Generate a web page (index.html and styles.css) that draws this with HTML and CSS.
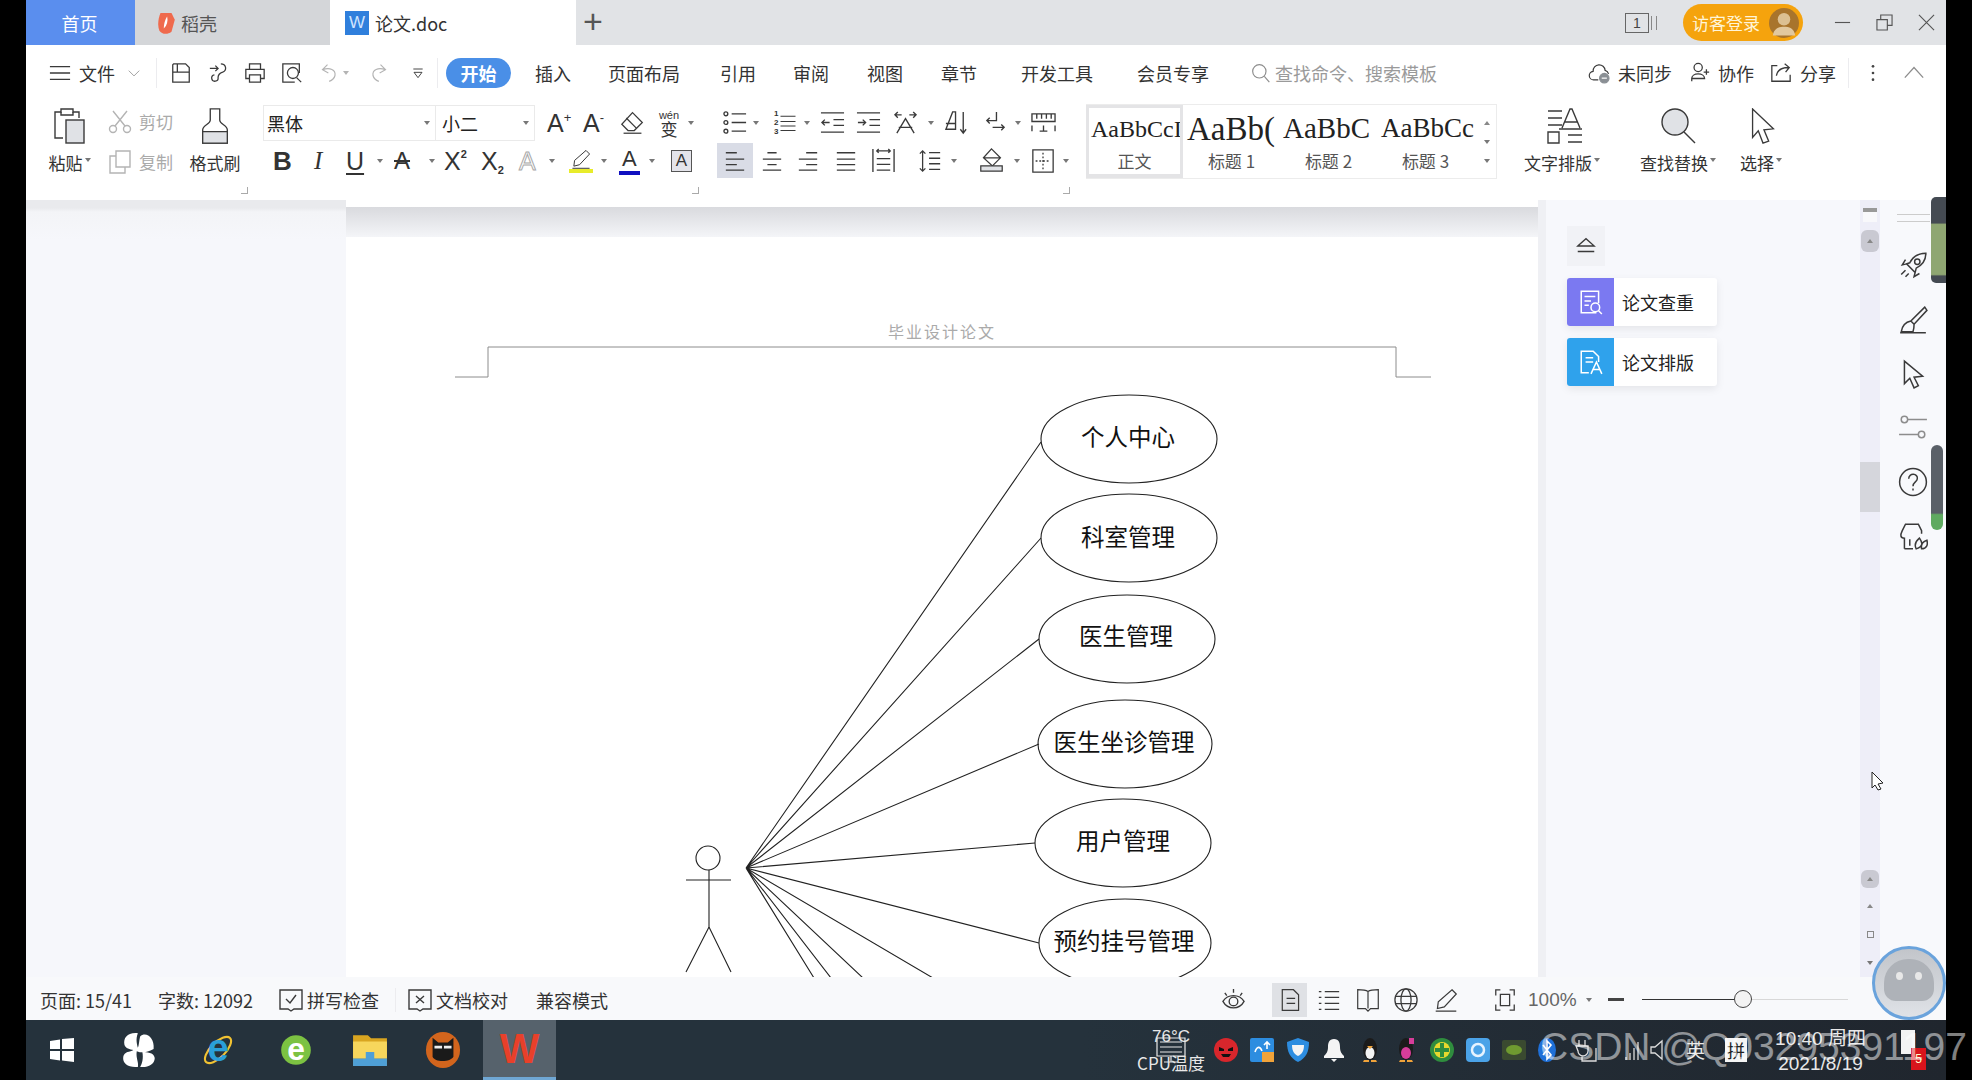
FILE: index.html
```html
<!DOCTYPE html>
<html lang="zh">
<head>
<meta charset="utf-8">
<title>论文.doc</title>
<link rel="stylesheet" href="styles.css">
</head>
<body>
<svg class="defs" width="0" height="0">
  <symbol id="menu" viewBox="0 0 24 24"><path d="M1 5h22M1 12h22M1 19h22"/></symbol>
  <symbol id="chev" viewBox="0 0 24 24"><path d="M3 8l9 9 9-9"/></symbol>
  <symbol id="save" viewBox="0 0 24 24"><path d="M4 2h13l4 4v16H3V3zM3 11h18M8 11V2"/></symbol>
  <symbol id="send" viewBox="0 0 24 24"><path d="M2 7h9M8 4l3 3-3 3M14 2c6 0 7 7 2 9-3 1-5 3-5 6a3.500 3.500 0 1 1-4-3"/></symbol>
  <symbol id="print" viewBox="0 0 24 24"><path d="M6 8V2h12v6M6 18H2V8h20v10h-4M6 14h12v8H6z"/></symbol>
  <symbol id="preview" viewBox="0 0 24 24"><path d="M15 22H2V2h18v10"/><circle cx="13" cy="12" r="6"/><path d="M17 17l5 5"/></symbol>
  <symbol id="undo" viewBox="0 0 24 24"><path d="M9 2L3 8l7 4M3 8c9-3 16 0 15 7-1 4-4 6-7 7"/></symbol>
  <symbol id="redo" viewBox="0 0 24 24"><path d="M15 2l6 6-7 4M21 8c-9-3-16 0-15 7 1 4 4 6 7 7"/></symbol>
  <symbol id="custom" viewBox="0 0 24 24"><path d="M5 6h14M6 11h12l-6 8z"/></symbol>
  <symbol id="search" viewBox="0 0 24 24"><circle cx="10" cy="10" r="8"/><path d="M16 16l6 7"/></symbol>
  <symbol id="cloud" viewBox="0 0 28 24"><path d="M12 20H7a5 5 0 0 1-1-10 7 7 0 0 1 14-1 6 6 0 0 1 4 4"/><circle cx="19" cy="18" r="5.500" class="fill-gray"/><path class="stroke-white" d="M16 18h6"/></symbol>
  <symbol id="collab" viewBox="0 0 24 24"><circle cx="10" cy="6" r="4.500"/><path d="M3 21v-3c0-3 3-5 7-5s7 2 7 5H3zM19 8v6M16 11h6"/></symbol>
  <symbol id="shareup" viewBox="0 0 24 24"><path d="M8 4H2v17h20v-7M7 15c1-6 6-9 13-9M16 2l5 4-4 5"/></symbol>
  <symbol id="dots" viewBox="0 0 6 24"><circle cx="3" cy="4" r="1.600" class="fill-dark"/><circle cx="3" cy="12" r="1.600" class="fill-dark"/><circle cx="3" cy="20" r="1.600" class="fill-dark"/></symbol>
  <symbol id="caretup" viewBox="0 0 24 24"><path d="M2 17L12 6l10 11"/></symbol>
  <symbol id="paste" viewBox="0 0 32 36"><path d="M9 30H1V4h6V1h12v3h6v6"/><path d="M7 4v3h12V4"/><rect x="12" y="12" width="18" height="23" class="fill-light"/></symbol>
  <symbol id="cut" viewBox="0 0 24 24"><circle cx="5" cy="19" r="3.500"/><circle cx="19" cy="19" r="3.500"/><path d="M7 16L19 1M17 16L5 1"/></symbol>
  <symbol id="copy" viewBox="0 0 24 24"><path d="M8 1h14v16H8zM8 6H2v17h15v-6"/></symbol>
  <symbol id="brush" viewBox="0 0 30 38"><path d="M10 1h10v12c0 4 8 5 8 10v14H2V23c0-5 8-6 8-10z"/><path d="M2 25h26v12H2z" class="fill-light"/></symbol>
  <symbol id="eraser" viewBox="0 0 28 28"><path d="M14 3l11 11-9 9H9l-7-7zM7 9l11 11" /><path d="M4 26h20"/></symbol>
  <symbol id="bullets" viewBox="0 0 26 26"><circle cx="3" cy="4" r="2"/><circle cx="3" cy="13" r="2"/><circle cx="3" cy="22" r="2"/><path d="M9 4h15M9 13h15M9 22h15"/></symbol>
  <symbol id="outdent" viewBox="0 0 26 26"><path d="M1 3h24M14 10h11M14 16h11M1 23h24M10 13H2M5 10l-3 3 3 3"/></symbol>
  <symbol id="indent" viewBox="0 0 26 26"><path d="M1 3h24M14 10h11M14 16h11M1 23h24M2 13h8M7 10l3 3-3 3"/></symbol>
  <symbol id="cross" viewBox="0 0 26 26"><path d="M4 24L13 9l9 15M6 18h14M2 5h7M5 2L2 5l3 3M24 5h-7M21 2l3 3-3 3"/></symbol>
  <symbol id="sortA" viewBox="0 0 26 26"><path d="M2 20L9 2h3v18zM2 20h10M2 14l10 0M20 2v22M17 20l3 4 3-4"/></symbol>
  <symbol id="para" viewBox="0 0 26 26"><path d="M14 2v9H4M7 8l-3 3 3 3M10 18h12M19 15l3 3-3 3"/></symbol>
  <symbol id="ruler" viewBox="0 0 26 26"><path d="M1 4h24v8H1zM6 4v5M11 4v5M16 4v5M21 4v5M1 16v6M25 16v6M9 22h8M13 16v6"/></symbol>
  <symbol id="al" viewBox="0 0 24 24"><path d="M2 3h12M2 10h20M2 16h12M2 22h20"/></symbol>
  <symbol id="ac" viewBox="0 0 24 24"><path d="M7 3h10M2 10h20M7 16h10M2 22h20"/></symbol>
  <symbol id="ar" viewBox="0 0 24 24"><path d="M10 3h12M2 10h20M10 16h12M2 22h20"/></symbol>
  <symbol id="aj" viewBox="0 0 24 24"><path d="M2 3h20M2 10h20M2 16h20M2 22h20"/></symbol>
  <symbol id="ad" viewBox="0 0 26 26"><path d="M2 1v24M24 1v24M6 3h14M8 1L6 3l2 2M18 1l2 2-2 2M6 11h14M6 17h14M6 23h14"/></symbol>
  <symbol id="lines" viewBox="0 0 26 26"><path d="M5 2v22M2 5l3-3 3 3M2 21l3 3 3-3M12 4h12M12 10h12M12 16h12M12 22h12"/></symbol>
  <symbol id="shade" viewBox="0 0 28 28"><path d="M14 1l10 10-9 9-10-9zM5 11h19"/><path d="M2 20h24v6H2z" class="fill-light"/></symbol>
  <symbol id="border" viewBox="0 0 26 26"><path d="M2 1h22v24H2z"/><path d="M13 4v18M5 13h16" stroke-dasharray="2 2"/></symbol>
  <symbol id="typeset" viewBox="0 0 36 36"><path d="M1 3h14M1 10h14M1 17h14M15 20L23 1h2l8 19M18 14h12M12 21h23M21 27h14M21 34h14M1 24h11v11H1z"/></symbol>
  <symbol id="find" viewBox="0 0 36 36"><circle cx="15" cy="14" r="13" class="fill-light"/><path d="M24 24l11 11"/></symbol>
  <symbol id="pointer" viewBox="0 0 26 38"><path d="M2 1l22 21-10 1 5 12-6 2-5-13-6 7z"/></symbol>
  <symbol id="minus" viewBox="0 0 18 18"><path d="M1 9h16"/></symbol>
  <symbol id="restore" viewBox="0 0 18 18"><path d="M1 6h11v11H1zM5 6V1h12v11h-5"/></symbol>
  <symbol id="close" viewBox="0 0 18 18"><path d="M1 1l16 16M17 1L1 17"/></symbol>
  <symbol id="eject" viewBox="0 0 24 24"><path d="M3 12l9-8 9 8zM3 18h18"/></symbol>
  <symbol id="rocket" viewBox="0 0 28 28"><path d="M26 2c-7 0-12 3-15 9l-3 1 8 8 1-4c6-3 9-8 9-14zM8 12l-4 1 3-5M16 20l-1 4 5-3M7 18l-4 4M10 21l-3 3"/><circle cx="18" cy="10" r="2.500"/></symbol>
  <symbol id="pen" viewBox="0 0 28 28"><path d="M25 2l-13 13 3 3L27 5zM12 15c-5 1-8 4-9 10h11c1-3 1-5 1-7M2 26h24"/></symbol>
  <symbol id="arrow" viewBox="0 0 24 28"><path d="M4 2l17 14-8 1 4 8-4 2-4-9-5 5z"/></symbol>
  <symbol id="sliders" viewBox="0 0 28 28"><circle cx="6" cy="6" r="3"/><path d="M9 6h18M1 20h18"/><circle cx="22" cy="20" r="3"/></symbol>
  <symbol id="help" viewBox="0 0 28 28"><circle cx="14" cy="14" r="12.500"/><path d="M10 11c0-6 9-5 8 0 0 3-4 3-4 7M14 20v2"/></symbol>
  <symbol id="store" viewBox="0 0 28 28"><path d="M6 26V16c-4 0-4-3-2-7l3-6h12l3 6v3M6 26h8M11 17v6"/><path d="M17 26c-3-6 2-9 3-10 2 3 5 7-3 10zM22 26c5 0 6-4 5-8-3 1-6 3-5 8z"/></symbol>
  <symbol id="spell" viewBox="0 0 24 24"><path d="M1 2h22v19h-8l-3 2-3-2H1zM7 11l4 4 6-8"/></symbol>
  <symbol id="proof" viewBox="0 0 24 24"><path d="M1 2h22v19h-8l-3 2-3-2H1zM8 8l8 7M16 8l-8 7"/></symbol>
  <symbol id="eye" viewBox="0 0 26 26"><path d="M2 15c5-8 17-8 22 0-5 9-17 9-22 0z"/><circle cx="13" cy="15" r="4.500"/><path d="M4 6l2 3M13 2v4M22 6l-2 3"/></symbol>
  <symbol id="page" viewBox="0 0 24 28"><path d="M3 2h13l6 6v18H3zM8 12h10M8 18h10"/></symbol>
  <symbol id="outline" viewBox="0 0 26 26"><path d="M1 3h3M8 3h17M1 10h3M8 10h17M1 17h3M8 17h17M1 24h3M8 24h17"/></symbol>
  <symbol id="book" viewBox="0 0 26 28"><path d="M13 4C10 2 5 2 1 2v22h9l3 3 3-3h9V2c-4 0-9 0-12 2zM13 4v20"/></symbol>
  <symbol id="globe" viewBox="0 0 26 26"><circle cx="13" cy="13" r="12"/><ellipse cx="13" cy="13" rx="5.500" ry="12"/><path d="M1 9h24M1 17h24"/></symbol>
  <symbol id="markup" viewBox="0 0 26 28"><path d="M20 2l5 5L11 22l-8 2 1-8zM1 27h24"/></symbol>
  <symbol id="fit" viewBox="0 0 24 26"><path d="M7 2H2v6M17 2h5v6M7 24H2v-6M17 24h5v-6M7 7h10v12H7z"/></symbol>
</svg>

<div class="app">
  <header class="titlebar">
    <div class="tab tab-home">首页</div>
    <div class="tab tab-shell">
      <svg class="shell-logo" viewBox="0 0 16 20"><path class="shell-red" d="M3 1h10l3 6-3 11c-4 3-9 2-11-1C0 12 1 6 3 1z"/><path class="shell-white" d="M9 4c1 4 0 8-3 11 0-4 1-8 3-11z"/></svg>
      <span>稻壳</span>
    </div>
    <div class="tab tab-doc">
      <span class="doc-logo">W</span>
      <span>论文.doc</span>
    </div>
    <div class="tab-add">+</div>
    <div class="title-right">
      <div class="page-box"><span class="page-num">1</span><span class="page-bars"></span></div>
      <div class="login"><span>访客登录</span><svg class="avatar" viewBox="0 0 24 24"><circle cx="12" cy="12" r="12" class="av-bg"/><circle cx="12" cy="9" r="5" class="av-head"/><path class="av-body" d="M3 22c1-6 5-7 9-7s8 1 9 7z"/></svg></div>
      <svg class="win"><use href="#minus"/></svg>
      <svg class="win"><use href="#restore"/></svg>
      <svg class="win"><use href="#close"/></svg>
    </div>
  </header>

  <nav class="menubar">
    <svg class="ic i22"><use href="#menu"/></svg>
    <span>文件</span>
    <svg class="ic i14 dim"><use href="#chev"/></svg>
    <i class="vsep"></i>
    <svg class="ic i22"><use href="#save"/></svg>
    <svg class="ic i22"><use href="#send"/></svg>
    <svg class="ic i22"><use href="#print"/></svg>
    <svg class="ic i22"><use href="#preview"/></svg>
    <svg class="ic i20 faint"><use href="#undo"/></svg>
    <i class="caret faint-caret"></i>
    <svg class="ic i20 faint"><use href="#redo"/></svg>
    <svg class="ic i16"><use href="#custom"/></svg>
    <i class="vsep"></i>
    <span class="pill">开始</span>
    <span>插入</span>
    <span>页面布局</span>
    <span>引用</span>
    <span>审阅</span>
    <span>视图</span>
    <span>章节</span>
    <span>开发工具</span>
    <span>会员专享</span>
    <svg class="ic i20 dim"><use href="#search"/></svg>
    <span class="muted">查找命令、搜索模板</span>
    <svg class="ic i24"><use href="#cloud"/></svg>
    <span>未同步</span>
    <svg class="ic i22"><use href="#collab"/></svg>
    <span>协作</span>
    <svg class="ic i22"><use href="#shareup"/></svg>
    <span>分享</span>
    <i class="vsep"></i>
    <svg class="ic i18"><use href="#dots"/></svg>
    <svg class="ic i22 dim"><use href="#caretup"/></svg>
  </nav>

  <section class="ribbon">
    <div class="ribbon-main">
      <div class="big big-paste">
        <svg class="ic big-ic"><use href="#paste"/></svg>
        <span class="big-label">粘贴<i class="caret"></i></span>
      </div>
      <div class="clip-col">
        <div class="clip-item"><svg class="ic i24 faint"><use href="#cut"/></svg><span>剪切</span></div>
        <div class="clip-item"><svg class="ic i24 faint"><use href="#copy"/></svg><span>复制</span></div>
      </div>
      <div class="big big-brush">
        <svg class="ic big-ic"><use href="#brush"/></svg>
        <span class="big-label">格式刷</span>
      </div>

      <div class="tools">
        <div class="tool-row tool-row-a">
          <div class="select select-font"><span>黑体</span><i class="caret"></i></div>
          <div class="select select-size"><span>小二</span><i class="caret"></i></div>
          <span class="glyph">A<sup class="mini">+</sup></span>
          <span class="glyph">A<sup class="mini">-</sup></span>
          <svg class="ic i26"><use href="#eraser"/></svg>
          <span class="wen"><b>wén</b><em>变</em></span>
          <i class="caret"></i>
          <svg class="ic i26"><use href="#bullets"/></svg>
          <i class="caret"></i>
          <span class="numlist"><span class="nums">1<br>2<br>3</span><svg class="ic i18h"><use href="#aj"/></svg></span>
          <i class="caret"></i>
          <svg class="ic i26"><use href="#outdent"/></svg>
          <svg class="ic i26"><use href="#indent"/></svg>
          <svg class="ic i26"><use href="#cross"/></svg>
          <i class="caret"></i>
          <svg class="ic i26"><use href="#sortA"/></svg>
          <svg class="ic i26"><use href="#para"/></svg>
          <i class="caret"></i>
          <svg class="ic i26"><use href="#ruler"/></svg>
        </div>
        <div class="tool-row tool-row-b">
          <b class="glyph glyph-b">B</b>
          <i class="glyph glyph-i">I</i>
          <span class="glyph glyph-u">U</span><i class="caret"></i>
          <span class="glyph glyph-s">A</span><i class="caret"></i>
          <span class="glyph">X<sup class="mini-b">2</sup></span>
          <span class="glyph">X<sub class="mini-b">2</sub></span>
          <span class="glyph glyph-o">A</span><i class="caret"></i>
          <span class="hl"><svg class="ic i20"><use href="#markup"/></svg></span><i class="caret"></i>
          <span class="glyph glyph-c">A</span><i class="caret"></i>
          <span class="glyph glyph-box">A</span>
          <span class="sel-bg"><svg class="ic i22"><use href="#al"/></svg></span>
          <svg class="ic i22"><use href="#ac"/></svg>
          <svg class="ic i22"><use href="#ar"/></svg>
          <svg class="ic i22"><use href="#aj"/></svg>
          <svg class="ic i26"><use href="#ad"/></svg>
          <svg class="ic i24"><use href="#lines"/></svg><i class="caret"></i>
          <svg class="ic i26"><use href="#shade"/></svg><i class="caret"></i>
          <svg class="ic i24"><use href="#border"/></svg><i class="caret"></i>
        </div>
      </div>

      <div class="gallery">
        <div class="style style-on"><span class="sample s1">AaBbCcI</span><span class="style-name">正文</span></div>
        <div class="style"><span class="sample s2">AaBb(</span><span class="style-name">标题 1</span></div>
        <div class="style"><span class="sample s3">AaBbC</span><span class="style-name">标题 2</span></div>
        <div class="style"><span class="sample s4">AaBbCc</span><span class="style-name">标题 3</span></div>
        <div class="gallery-nav"><i class="caret caret-up"></i><i class="caret"></i><i class="caret caret-more"></i></div>
      </div>

      <div class="big big-type">
        <svg class="ic big-ic"><use href="#typeset"/></svg>
        <span class="big-label">文字排版<i class="caret"></i></span>
      </div>
      <div class="big big-find">
        <svg class="ic big-ic"><use href="#find"/></svg>
        <span class="big-label">查找替换<i class="caret"></i></span>
      </div>
      <div class="big big-pick">
        <svg class="ic big-ic"><use href="#pointer"/></svg>
        <span class="big-label">选择<i class="caret"></i></span>
      </div>
    </div>
    <div class="corners"><i class="corner"></i><i class="corner"></i><i class="corner"></i></div>
  </section>

  <main class="workspace">
    <div class="gutter"></div>
    <div class="pages">
      <div class="page-prev"></div>
      <div class="page-gap"></div>
      <svg class="page" viewBox="346 236 1192 740" width="1192" height="740">
        <text class="hdr" x="942" y="337">毕业设计论文</text>
        <path class="hdr-line" d="M455 376h33v-30h908v30h35"/>
        <g class="uml">
          <circle cx="708" cy="857" r="12"/>
          <path d="M686 879h45M709 869v57M709 926l-23 45M709 926l22 45"/>
          <path d="M746 867L1041 441M746 867L1041 537M746 867L1039 638M746 867L1039 743M746 867L1035 842M746 867L1039 942M746 867L933 977M746 867L863 977M746 867L831 977M746 867L814 977"/>
          <ellipse cx="1129" cy="438" rx="88" ry="44"/>
          <ellipse cx="1129" cy="537" rx="88" ry="44"/>
          <ellipse cx="1127" cy="638" rx="88" ry="44"/>
          <ellipse cx="1125" cy="743" rx="87" ry="44"/>
          <ellipse cx="1123" cy="842" rx="88" ry="44"/>
          <ellipse cx="1125" cy="942" rx="86" ry="44"/>
        </g>
        <g class="uml-text">
          <text x="1128" y="445">个人中心</text>
          <text x="1128" y="545">科室管理</text>
          <text x="1126" y="644">医生管理</text>
          <text x="1124" y="750">医生坐诊管理</text>
          <text x="1123" y="849">用户管理</text>
          <text x="1124" y="949">预约挂号管理</text>
        </g>
      </svg>
    </div>
    <aside class="panel">
      <div class="panel-up"><svg class="ic i22"><use href="#eject"/></svg></div>
      <div class="panel-btn">
        <span class="panel-ic panel-purple"><svg class="ic-w" viewBox="0 0 24 24"><path d="M17 22H3V2h16v11M6 7h10M6 11h6M6 15h4"/><circle cx="16" cy="17" r="4"/><path d="M19 20l3 3"/></svg></span>
        <span class="panel-txt">论文查重</span>
      </div>
      <div class="panel-btn">
        <span class="panel-ic panel-blue"><svg class="ic-w" viewBox="0 0 24 24"><path d="M10 22H3V2h11l5 5v5M7 8h7M7 12h7M12 23l5-11 5 11M14 19h6"/></svg></span>
        <span class="panel-txt">论文排版</span>
      </div>
    </aside>
    <div class="vscroll">
      <i class="sb-mark"></i>
      <i class="sb-btn"><i class="caret caret-up"></i></i>
      <i class="sb-thumb"></i>
      <i class="sb-btn sb-low"><i class="caret caret-up"></i></i>
      <i class="caret caret-up sb-a"></i>
      <i class="sb-dot"></i>
      <i class="caret sb-b"></i>
    </div>
    <aside class="sidebar">
      <i class="side-lines"></i>
      <svg class="ic i28 first"><use href="#rocket"/></svg>
      <svg class="ic i28"><use href="#pen"/></svg>
      <svg class="ic i28"><use href="#arrow"/></svg>
      <svg class="ic i28 dim"><use href="#sliders"/></svg>
      <svg class="ic i28"><use href="#help"/></svg>
      <svg class="ic i28"><use href="#store"/></svg>
    </aside>
  </main>

  <footer class="statusbar">
    <span>页面: 15/41</span>
    <span>字数: 12092</span>
    <svg class="ic i24"><use href="#spell"/></svg>
    <span>拼写检查</span>
    <i class="vsep"></i>
    <svg class="ic i24"><use href="#proof"/></svg>
    <span>文档校对</span>
    <span>兼容模式</span>
    <svg class="ic i26"><use href="#eye"/></svg>
    <span class="view-on"><svg class="ic i24"><use href="#page"/></svg></span>
    <svg class="ic i22"><use href="#outline"/></svg>
    <svg class="ic i24"><use href="#book"/></svg>
    <svg class="ic i24"><use href="#globe"/></svg>
    <svg class="ic i24"><use href="#markup"/></svg>
    <svg class="ic i24"><use href="#fit"/></svg>
    <span class="muted-2">100%</span>
    <i class="caret"></i>
    <i class="zoom-minus"></i>
    <div class="zoom-track"><i class="zoom-fill"></i><i class="zoom-knob"></i></div>
    <span class="zoom-plus">+</span>
  </footer>

  <div class="taskbar">
    <div class="task-left">
      <svg class="t-win" viewBox="0 0 24 24"><path d="M0 3l10-1.500V11H0zM12 1l12-1v11H12zM0 13h10v9.500L0 21zM12 13h12v11l-12-1.500z"/></svg>
      <svg class="t-app" viewBox="0 0 32 32"><path class="t-white" d="M15 1C6 0 2 5 3 11c1 4 5 4 8 5-3 2-8 1-9 6-1 6 5 10 13 9 1-4-2-8-1-14 5 2 9 1 15-2C30 5 22-1 17 4c-1 4-1 8-2 10-1-4-2-8 0-13zM19 18c4 0 10 0 11 5 0 6-7 9-13 8 2-3 3-8 2-13z"/></svg>
      <svg class="t-app" viewBox="0 0 34 34"><ellipse class="t-ring" cx="17" cy="17" rx="16" ry="7" transform="rotate(-45 17 17)"/><text class="t-e t-e-blue" x="17" y="27">e</text></svg>
      <svg class="t-app" viewBox="0 0 34 34"><circle class="t-green" cx="17" cy="17" r="14"/><text class="t-e t-e-white" x="17" y="26">e</text></svg>
      <svg class="t-app" viewBox="0 0 34 34"><path class="t-folder-b" d="M1 3h14l3 3h15v26H1z"/><path class="t-folder-f" d="M1 9h32v16H1z"/><path class="t-folder-c" d="M1 25h32v7H1zM13 19h8v8h-8z"/></svg>
      <svg class="t-app" viewBox="0 0 38 38"><ellipse class="t-orange" cx="19" cy="19" rx="18" ry="19"/><path class="t-black" d="M8 6l6 5h10l6-5v20c-3 6-20 6-22 0z"/><path class="t-glass" d="M10 16h8M20 16h8"/></svg>
      <div class="t-active"><span class="wps-w">W</span></div>
    </div>
    <div class="task-right">
      <div class="temp">
        <span class="temp-v">76°C</span>
        <svg class="temp-ic" viewBox="0 0 30 26"><path d="M1 1h28v18H1zM4 5h22M4 10h22M4 15h22M15 19v6M8 25h14"/></svg>
        <span class="temp-l">CPU温度</span>
      </div>
      <svg class="t-tray tray-first" viewBox="0 0 24 24"><circle class="tr-red" cx="12" cy="12" r="12"/><path class="tr-blk" d="M5 9l5 2v2H5zM19 9l-5 2v2h5zM7 16h10l-2 3H9z"/></svg>
      <svg class="t-tray" viewBox="0 0 24 24"><rect class="tr-blue" width="24" height="24" rx="2"/><path class="tr-org" d="M12 14h12v10H12z"/><path class="tr-line" d="M5 14c2-6 5-6 7-1M17 11V4M14 7l3-3 3 3"/></svg>
      <svg class="t-tray" viewBox="0 0 24 24"><path class="tr-blue" d="M12 0l11 4c0 10-3 16-11 20C4 20 1 14 1 4z"/><path class="tr-wh" d="M6 7h12c0 6-2 9-6 11-4-2-6-5-6-11z"/></svg>
      <svg class="t-tray" viewBox="0 0 24 24"><path class="tr-wh" d="M12 1c5 0 6 4 6 8 0 5 2 7 4 9v2H2v-2c2-2 4-4 4-9 0-4 1-8 6-8zM9 21h6l-3 3z"/></svg>
      <svg class="t-tray" viewBox="0 0 24 24"><ellipse class="tr-blk2" cx="12" cy="11" rx="7" ry="11"/><ellipse class="tr-wh" cx="12" cy="15" rx="4.500" ry="6"/><path class="tr-org" d="M6 22h5v2H5zM13 22h5l1 2h-6zM9 8h6l-3 3z"/></svg>
      <svg class="t-tray" viewBox="0 0 24 24"><ellipse class="tr-blk2" cx="12" cy="11" rx="7" ry="11"/><ellipse class="tr-pink" cx="12" cy="15" rx="5" ry="6"/><path class="tr-pink" d="M15 0h5v6h-5z"/><path class="tr-org" d="M6 22h5v2H5zM13 22h5l1 2h-6z"/></svg>
      <svg class="t-tray" viewBox="0 0 24 24"><circle class="tr-yg" cx="12" cy="12" r="12"/><circle class="tr-yel" cx="12" cy="12" r="8"/><path class="tr-gr" d="M10 5h4v5h5v4h-5v5h-4v-5H5v-4h5z"/></svg>
      <svg class="t-tray" viewBox="0 0 24 24"><rect class="tr-sky" width="24" height="24" rx="4"/><circle class="tr-ringw" cx="12" cy="12" r="6"/></svg>
      <svg class="t-tray" viewBox="0 0 24 24"><rect class="tr-nv" y="2" width="24" height="20" rx="2"/><ellipse class="tr-nv2" cx="12" cy="12" rx="8" ry="5"/></svg>
      <svg class="t-tray bt" viewBox="0 0 18 24"><ellipse class="tr-bt" cx="9" cy="12" rx="9" ry="12"/><path class="tr-line" d="M5 7l8 10-4 4V3l4 4-8 10"/></svg>
      <svg class="tr-sym plug" viewBox="0 0 22 24"><path d="M4 2v6M10 2v6M1 8h12v5a5 5 0 0 1-10 0zM7 18v5h14V10"/></svg>
      <svg class="tr-sym net" viewBox="0 0 16 24"><path d="M1 22v-3M5 22v-7M9 22V10M13 22V4"/></svg>
      <svg class="tr-sym spk" viewBox="0 0 14 24"><path d="M1 9h4l7-6v18l-7-6H1z"/></svg>
      <span class="tray-txt lang">英</span>
      <span class="tray-pin">拼</span>
      <div class="clock"><span>10:40 周四</span><span>2021/8/19</span></div>
      <div class="notify"><i class="notify-w"></i><span class="notify-b">5</span></div>
    </div>
  </div>
</div>

<i class="meter meter-a"></i>
<i class="meter meter-b"></i>
<svg class="mouse" viewBox="0 0 14 20"><path d="M1 1l11 11-5 1 3 5-3 1-3-5-3 3z"/></svg>
<div class="robot">
  <div class="robot-face"><i></i><i></i></div>
</div>
<div class="watermark">CSDN @Q03295391197</div>
</body>
</html>
```

FILE: styles.css
```css
* { box-sizing: border-box; }
html, body { margin: 0; height: 100%; }
body {
  background: #000;
  color: #333;
  font-family: "Noto Sans CJK SC", "Liberation Sans", sans-serif;
  font-size: 18px;
  line-height: 24px;
  overflow: hidden;
}
i, em { font-style: normal; }
.defs { position: absolute; }
.app { margin-left: 26px; width: 1920px; height: 1080px; display: flex; flex-direction: column; background: #fff; }

/* icons */
.ic { fill: none; stroke: #3a3a3a; stroke-width: 1.4; display: block; overflow: visible; }
.i14 { width: 14px; height: 14px; }
.i16 { width: 16px; height: 16px; }
.i18 { width: 6px; height: 20px; }
.i18h { width: 18px; height: 26px; }
.i20 { width: 20px; height: 20px; }
.i22 { width: 22px; height: 22px; }
.i24 { width: 24px; height: 24px; }
.i26 { width: 25px; height: 25px; }
.i28 { width: 30px; height: 30px; }
.dim { stroke: #8d8d8d; }
.faint { stroke: #b4b4b4; }
.fill-gray { fill: #8a8f94; stroke: #8a8f94; }
.stroke-white { stroke: #fff; }
.fill-dark { fill: #444; stroke: none; }
.fill-light { fill: #e0e2e6; }
.caret { display: block; width: 0; height: 0; border: 3.5px solid transparent; border-top: 4px solid #777; border-bottom: 0; }
.caret-up { border-top: 0; border-bottom: 4px solid #888; }
.caret-more { box-shadow: 0 -3px 0 -2px #888; }
.faint-caret { border-top-color: #b4b4b4; }
.vsep { display: block; width: 1px; height: 30px; background: #ececef; }

/* title bar */
.titlebar { height: 45px; flex: none; display: flex; background: #e1e3e6; }
.tab { display: flex; align-items: center; height: 45px; }
.tab-home { width: 109px; background: #5a8eee; color: #fff; justify-content: center; padding-right: 2px; }
.tab-shell { width: 195px; background: #d4d6d9; padding-left: 22px; gap: 6px; color: #555; }
.shell-logo { width: 18px; height: 22px; }
.shell-red { fill: #ef6a4d; }
.shell-white { fill: #fff; }
.tab-doc { width: 246px; background: #fff; padding-left: 15px; gap: 6px; color: #333; }
.doc-logo { width: 24px; height: 24px; background: #2f7fdc; color: #cfe4ff; font: 17px/24px "Liberation Sans", sans-serif; text-align: center; }
.tab-add { width: 36px; margin-left: -1px; text-align: center; font: 34px/42px "Liberation Sans", sans-serif; color: #555; }
.title-right { margin-left: auto; display: flex; align-items: center; }
.page-box { display: flex; align-items: center; gap: 2px; margin-right: 26px; }
.page-num { width: 24px; height: 20px; border: 1px solid #666; font: 14px/18px "Liberation Sans", sans-serif; text-align: center; color: #444; }
.page-bars { width: 6px; height: 14px; border-left: 1px solid #888; border-right: 1px solid #888; }
.login { width: 120px; height: 37px; border-radius: 19px; background: #f5a30d; color: #fff5d8; display: flex; align-items: center; justify-content: space-between; padding: 0 4px 0 9px; font-size: 17px; margin-right: 31px; }
.avatar { width: 30px; height: 30px; }
.av-bg { fill: #a8742c; }
.av-head { fill: #dcc092; }
.av-body { fill: #e2c89e; }
.win { width: 17px; height: 17px; fill: none; stroke: #555; stroke-width: 1.2; margin-right: 25px; }
.win:last-child { margin-right: 11px; }

/* menu bar */
.menubar {
  height: 58px; flex: none; padding: 0 0 2px 23px; background: #fff;
  display: grid; align-items: center; justify-items: start;
  grid-template-columns: 30px 48px 29px 14px 38px 36px 37px 39px 23px 25px 42px 27px 9px 89px 73px 112px 73px 74px 74px 80px 116px 114px 24px 313px 30px 71px 29px 52px 30px 48px 22px 33px auto;
}
.pill { width: 65px; height: 30px; border-radius: 15px; background: #4a8fe7; color: #fff; font-weight: 700; text-align: center; line-height: 30px; }
.muted { color: #9a9a9a; }

/* ribbon */
.ribbon { height: 97px; flex: none; background: #fff; display: flex; flex-direction: column; }
.ribbon-main { display: flex; height: 75px; margin-top: 1px; }
.big { display: flex; flex-direction: column; align-items: center; flex: none; padding-top: 4px; }
.big-ic { width: 36px; height: 36px; }
.big-label { font-size: 17px; line-height: 24px; margin-top: 7px; display: flex; align-items: flex-start; white-space: nowrap; }
.big-label .caret { position: relative; top: 7px; margin-left: 2px; }
.big-paste { width: 63px; margin-left: 12px; }
.clip-col { width: 87px; display: flex; flex-direction: column; gap: 16px; padding: 6px 0 0 7px; flex: none; }
.clip-item { display: flex; align-items: center; gap: 7px; color: #aaa; font-size: 17px; }
.big-brush { width: 60px; margin-left: -3px; }
.tools { width: 823px; margin-left: 18px; flex: none; display: flex; flex-direction: column; }
.tool-row { display: grid; align-items: center; justify-items: start; }
.tool-row-a { height: 37px; grid-template-columns: 173px 111px 36px 37px 38px 30px 35px 30px 21px 30px 16px 36px 37px 35px 16px 39px 32px 16px auto; }
.tool-row-b { height: 38px; padding: 1px 0 0 10px; grid-template-columns: 41px 32px 31px 17px 35px 15px 37px 38px 30px 20px 32px 18px 30px 22px 46px 44px 36px 38px 36px 47px 33px 28px 35px 17px 32px auto; }
.select { height: 36px; border: 1px solid #eaeaea; display: flex; align-items: center; justify-content: space-between; padding: 0 5px 0 3px; color: #222; }
.select-font { width: 173px; }
.select-size { width: 99px; border-left: 0; padding-left: 6px; }
.glyph { font: 25px/30px "Liberation Sans", sans-serif; color: #333; white-space: nowrap; }
.mini { font-size: 13px; line-height: 0; vertical-align: 10px; }
.mini-b { font-size: 11px; line-height: 0; font-weight: 700; }
.mini-b:where(sup) { vertical-align: 12px; }
.mini-b:where(sub) { vertical-align: -4px; }
.glyph-b { font-weight: 700; font-size: 26px; }
.glyph-i { font: italic 25px/30px "Liberation Serif", serif; }
.glyph-u { text-decoration: underline; text-underline-offset: 3px; }
.glyph-s { text-decoration: line-through; font-size: 24px; }
.glyph-o { color: #fff; -webkit-text-stroke: 1px #a8a8a8; }
.glyph-c { font-size: 22px; line-height: 24px; border-bottom: 4px solid #1010c0; height: 28px; padding: 0 3px; }
.glyph-box { font-size: 17px; line-height: 20px; width: 21px; height: 22px; text-align: center; border: 1px solid #555; background: #e4e4ea; }
.hl { display: block; border-bottom: 4px solid #e8ec2a; width: 24px; padding-left: 2px; }
.wen { display: flex; flex-direction: column; align-items: center; width: 22px; line-height: 12px; }
.wen b { font: 11px/11px "Liberation Sans", sans-serif; }
.wen em { font-size: 17px; line-height: 15px; }
.numlist { display: flex; align-items: center; gap: 1px; }
.nums { font: 8px/9px "Liberation Sans", sans-serif; font-weight: 700; }
.sel-bg { width: 36px; height: 35px; background: #d9dce6; display: flex; align-items: center; justify-content: center; }
.gallery { width: 411px; height: 75px; flex: none; border: 1px solid #ececec; border-width: 1px 1px 1px 0; display: flex; }
.style { display: flex; flex-direction: column; align-items: center; width: 97px; overflow: hidden; flex: none; color: #555; }
.style-on { border: 3px solid #e4e4e6; border-bottom-width: 4px; width: 97px; }
.sample { display: block; width: 100%; height: 43px; overflow: hidden; font-family: "Liberation Serif", serif; color: #222; line-height: 46px; white-space: nowrap; text-align: left; flex: none; }
.s1 { font-size: 24px; padding-left: 2px; }
.s2 { font-size: 33px; line-height: 48px; padding-left: 4px; }
.s3 { font-size: 29px; padding-left: 3px; }
.s4 { font-size: 27px; padding-left: 4px; }
.style-name { font-size: 17px; line-height: 26px; }
.style-on .sample { height: 40px; line-height: 42px; }
.gallery-nav { flex: none; width: 18px; margin-left: 4px; display: flex; flex-direction: column; justify-content: space-around; align-items: center; padding: 8px 0; }
.big-type { width: 86px; margin-left: 22px; }
.big-type .big-ic { margin-left: 6px; }
.big-find { width: 90px; margin-left: 28px; }
.big-pick { width: 50px; margin-left: 13px; }
.big-pick .big-ic { margin-left: 4px; }
.corners { display: grid; grid-template-columns: 451px 371px auto; padding-left: 215px; margin-top: 8px; }
.corners .corner { display: block; width: 7px; height: 7px; border: solid #aaa; border-width: 0 1px 1px 0; }

/* workspace */
.workspace { flex: 1; min-height: 0; display: flex; background: #f7f8fc; }
.gutter { width: 320px; flex: none; background: linear-gradient(#e9eaed 0 8px, #f3f4f7 12px, #f6f7fb 40px); }
.pages { width: 1192px; flex: none; display: flex; flex-direction: column; overflow: hidden; }
.page-prev { height: 7px; flex: none; background: #fff; }
.page-gap { height: 30px; flex: none; background: linear-gradient(#d9dade, #f4f5f8); }
.page { display: block; flex: none; background: #fff; }
.hdr { font: 16px "Noto Sans CJK SC", sans-serif; fill: #aaa; text-anchor: middle; letter-spacing: 2px; }
.hdr-line { fill: none; stroke: #8c8c8c; stroke-width: 1; }
.uml { fill: none; stroke: #222; stroke-width: 1.1; }
.uml-text { font: 23.500px "Noto Sans CJK SC", sans-serif; fill: #111; text-anchor: middle; }
.panel { width: 322px; flex: none; padding: 26px 0 0 21px; border-left: 8px solid #eff0f4; display: flex; flex-direction: column; }
.panel-up { width: 38px; height: 40px; background: #f1f2f6; display: flex; align-items: center; justify-content: center; margin-bottom: 12px; }
.panel-btn { width: 150px; height: 48px; background: #fff; display: flex; align-items: center; box-shadow: 0 3px 8px rgba(0,0,0,.08); border-radius: 3px; margin-bottom: 12px; overflow: hidden; }
.panel-ic { width: 47px; height: 48px; display: flex; align-items: center; justify-content: center; }
.panel-purple { background: #7b79f1; }
.panel-blue { background: #2fa2ec; }
.ic-w { width: 26px; height: 26px; fill: none; stroke: #fff; stroke-width: 1.4; }
.panel-txt { color: #222; margin-left: 8px; }
.vscroll { width: 20px; flex: none; background: #eeeef8; display: flex; flex-direction: column; align-items: center; }
.sb-mark { width: 14px; height: 14px; margin-top: 8px; background: #f8f8fb; border-top: 4px solid #999; }
.sb-btn { width: 18px; height: 22px; margin-top: 8px; border-radius: 6px; background: #c9c9d2; display: flex; align-items: center; justify-content: center; }
.sb-thumb { width: 20px; height: 50px; margin-top: 210px; background: #d5d6dc; }
.sb-low { margin-top: 358px; height: 18px; }
.sb-a { margin-top: 16px; }
.sb-dot { width: 7px; height: 7px; border: 1px solid #888; margin-top: 23px; }
.sb-b { margin-top: 23px; }
.sidebar { width: 66px; flex: none; background: #f8f9fc; display: flex; flex-direction: column; align-items: center; gap: 24px; }
.side-lines { width: 33px; height: 8px; margin-top: 14px; border-top: 1px solid #ccc; border-bottom: 1px solid #ccc; margin-bottom: -14px; }
.sidebar .first { margin-top: 19px; }

/* status bar */
.statusbar {
  height: 43px; flex: none; background: #f8f9fb; padding: 2px 0 0 14px;
  display: grid; align-items: center; justify-items: start; font-size: 18px;
  grid-template-columns: 118px 121px 28px 88px 13px 28px 100px 685px 51px 46px 38px 38px 40px 59px 35px 58px 22px 34px auto auto;
}
.statusbar .vsep { height: 24px; }
.view-on { width: 35px; height: 34px; background: #dfe1e5; display: flex; align-items: center; justify-content: center; }
.muted-2 { color: #666; font-family: "Liberation Sans", sans-serif; font-size: 19px; }
.zoom-minus { width: 16px; height: 3px; background: #444; display: block; }
.zoom-track { width: 206px; height: 1px; background: #d8d8d8; position: relative; margin-right: 16px; }
.zoom-fill { display: block; width: 100px; height: 1px; background: #333; }
.zoom-knob { display: block; width: 18px; height: 18px; border: 1px solid #444; border-radius: 50%; background: #f3f3f3; position: absolute; left: 92px; top: -9px; }
.zoom-plus { font: 26px/26px "Liberation Sans", sans-serif; color: #444; }

/* task bar */
.taskbar { height: 60px; flex: none; background: linear-gradient(90deg, #25323c 0, #25323c 55%, #20262e 100%); display: flex; justify-content: space-between; color: #e8e8e8; }
.task-left { display: grid; align-items: center; justify-items: start; padding-left: 24px; grid-template-columns: 71px 79px 78px 74px 73px 58px 73px; }
.t-win { width: 24px; height: 24px; fill: #fff; }
.t-app { width: 36px; height: 36px; overflow: visible; }
.t-white { fill: #fff; }
.t-ring { fill: none; stroke: #f1c232; stroke-width: 2; }
.t-e { font: 700 36px "Liberation Sans", sans-serif; text-anchor: middle; }
.t-e-blue { fill: #2a9fd8; }
.t-e-white { fill: #fff; font-size: 30px; }
.t-green { fill: #7cc242; }
.t-folder-b { fill: #d9a520; }
.t-folder-f { fill: #f7d65c; }
.t-folder-c { fill: #4e9fd6; }
.t-orange { fill: #d2651d; }
.t-black { fill: #1a1a1a; }
.t-glass { stroke: #eee; stroke-width: 3; fill: none; }
.t-active { width: 73px; height: 60px; background: #56626c; border-bottom: 3px solid #6fa7d4; display: flex; align-items: center; justify-content: center; }
.wps-w { font: 700 42px/42px "Liberation Sans", sans-serif; color: #e8402a; }
.task-right { display: flex; align-items: center; gap: 12px; padding-right: 21px; }
.temp { width: 74px; position: relative; display: flex; flex-direction: column; align-items: center; font-size: 17px; line-height: 24px; }
.temp-v { font-family: "Liberation Sans", sans-serif; margin-bottom: 2px; }
.temp-ic { position: absolute; left: 22px; top: 12px; width: 30px; height: 26px; fill: none; stroke: #e8e8e8; stroke-width: 1.2; }
.tray-first { margin-left: -6px; }
.t-tray { width: 24px; height: 24px; flex: none; }
.tr-red { fill: #d8262c; }
.tr-blk { fill: #111; }
.tr-blk2 { fill: #1b1b1b; }
.tr-blue { fill: #2d8de0; }
.tr-org { fill: #f0a33a; }
.tr-line { fill: none; stroke: #fff; stroke-width: 1.6; }
.tr-wh { fill: #f4f4f4; }
.tr-pink { fill: #d63d9a; }
.tr-yg { fill: #2f8d3e; }
.tr-yel { fill: #e8d92e; }
.tr-gr { fill: #2f8d3e; }
.tr-sky { fill: #4ba3e8; }
.tr-ringw { fill: none; stroke: #e6f3ff; stroke-width: 2.500; }
.tr-nv { fill: #3a4a30; }
.tr-nv2 { fill: #6f9a30; }
.tr-bt { fill: #1f70d8; }
.bt { width: 18px; }
.tr-sym { height: 24px; fill: none; stroke: #ddd; stroke-width: 1.3; flex: none; }
.plug { width: 22px; margin-left: 7px; }
.net { width: 16px; margin-left: 16px; }
.spk { width: 14px; margin-left: -3px; }
.tray-txt { font-size: 19px; margin-left: 10px; }
.tray-pin { background: #f5f5f5; color: #222; width: 22px; height: 24px; font-size: 18px; text-align: center; margin-left: 8px; }
.clock { width: 95px; display: flex; flex-direction: column; align-items: center; font: 19px/25px "Liberation Sans", "Noto Sans CJK SC", sans-serif; margin-left: 14px; padding-top: 2px; }
.notify { position: relative; width: 24px; height: 40px; margin-left: 21px; }
.notify-w { display: block; width: 14px; height: 24px; background: #f3f3f3; }
.notify-b { position: absolute; left: 10px; top: 18px; width: 15px; height: 22px; background: #d8141c; color: #ffc; font: 12px/22px "Liberation Sans", sans-serif; text-align: center; }

/* overlays */
.meter { position: absolute; left: 1931px; width: 15px; background: #50565e; border-radius: 5px 0 0 5px; }
.meter-a { top: 197px; height: 86px; background: linear-gradient(#444a52 0 30%, #8fa672 32% 90%, #444a52 92%); }
.meter-b { top: 445px; height: 85px; border-radius: 6px; background: linear-gradient(#5a6068 0 80%, #5faa60 82%); width: 12px; }
.mouse { position: absolute; left: 1871px; top: 771px; width: 14px; height: 20px; fill: #fff; stroke: #222; stroke-width: 1; }
.robot { position: absolute; left: 1872px; top: 946px; width: 74px; height: 74px; border-radius: 50%; border: 3px solid #6aa3dc; background: linear-gradient(#c2c5ca, #dfe2e7); display: flex; align-items: center; justify-content: center; }
.robot-face { width: 50px; height: 42px; margin-top: -6px; border-radius: 24px 24px 12px 12px; background: #aeb2b8; display: flex; justify-content: center; gap: 12px; padding-top: 13px; }
.robot-face i { width: 7px; height: 8px; border-radius: 50%; background: #e8e8e8; }
.watermark { position: absolute; left: 1540px; top: 1024px; font: 39px/46px "Liberation Sans", sans-serif; color: rgba(255,255,255,.5); white-space: nowrap; }
```
